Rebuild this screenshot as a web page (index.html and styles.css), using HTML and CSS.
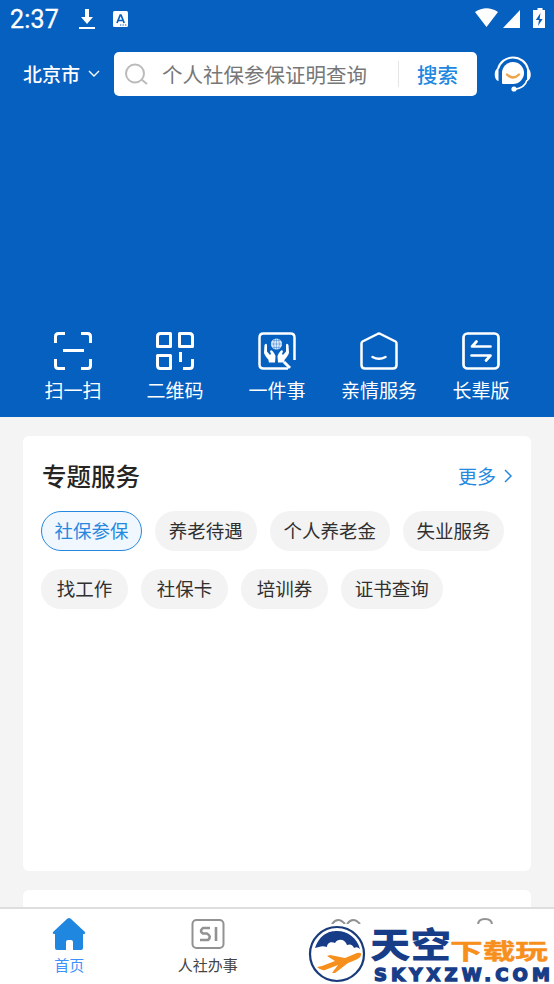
FILE: index.html
```html
<!DOCTYPE html>
<html lang="zh-CN">
<head>
<meta charset="UTF-8">
<title>首页</title>
<link rel="stylesheet" href="styles.css">
</head>
<body>
<div class="app">
  <header class="hero">
    <div class="status">
      <span class="clock">2:37</span>
      <svg class="download" width="16" height="22" viewBox="0 0 16 22"><path d="M6 1h4v8h4l-6 7-6-7h4zM0 19h16v2H0z" fill="#fff"/></svg>
      <svg class="input-mode" width="15" height="16" viewBox="0 0 15 16"><rect width="15" height="16" rx="1.5" fill="#fff"/><path d="M4 12 7.200 4h.8l3.200 8M5.200 9.500h5" fill="none" stroke="#0660c0" stroke-width="1.700"/><path d="M7 14h1.300M9.500 14h1.300M12 14h1.300" stroke="#0660c0"/></svg>
      <svg class="signals" width="72" height="22" viewBox="0 0 72 22" fill="#fff"><path d="M0 4Q11.500-3.500 23 4L11.500 19zM45 2v18H28zM60 2h2.500V0h5v2H70v18H58V2z"/><path d="m65.500 5-4.700 7h3.200l-1 6 4.600-7h-3z" fill="#0660c0"/></svg>
    </div>
    <div class="top-row">
      <span class="city">北京市</span>
      <svg class="caret" width="12" height="8" viewBox="0 0 12 8"><path d="m1 1 5 5 5-5" fill="none" stroke="#fff" stroke-width="1.400"/></svg>
      <div class="search">
        <svg width="24" height="22" viewBox="0 0 24 22" fill="none" stroke="#bbb" stroke-width="2"><circle cx="10" cy="10.500" r="9"/><path d="m16.500 16.500 5.500 4.500"/></svg>
        <span class="query">个人社保参保证明查询</span>
        <span class="submit">搜索</span>
      </div>
      <svg class="service" width="38" height="38" viewBox="0 0 38 38"><path d="M4 14a15.500 15.500 0 0 1 30 0" fill="none" stroke="#fff" stroke-width="2"/><path d="M4.500 13v13C-.5 25-.5 14 4.500 13M33 13v13c5-1 5-12 0-13" fill="#fff"/><path d="M33 25q-2 8-13 9.500" fill="none" stroke="#fff" stroke-width="1.600"/><circle cx="20" cy="34" r="2.600" fill="#fff"/><path d="M8 28V18a11 11 0 1 1 11 11H9q-1 0-1-1" fill="#fff"/><path d="M13 19.500q6 6 12 0" fill="none" stroke="#eea349" stroke-width="2.400" stroke-linecap="round"/></svg>
    </div>
    <nav class="shortcuts">
      <div class="shortcut"><svg viewBox="0 0 38 38"><path d="M1.500 11V4.500q0-3 3-3H11M27 1.500h6.500q3 0 3 3V11M1.500 27v6.500q0 3 3 3H11M27 36.500h6.500q3 0 3-3V27M9 18.500h21"/></svg><span>扫一扫</span></div>
      <div class="shortcut"><svg viewBox="0 0 38 38"><path d="M4.500 1.500h10v13h-13v-10q0-3 3-3M23.500 1.500h10q3 0 3 3v10h-13zM1.500 23.500h13v13h-10q-3 0-3-3zM24.500 20v10M36.500 27v6.500q0 3-3 3H27"/></svg><span>二维码</span></div>
      <div class="shortcut"><svg viewBox="0 0 38 38"><path d="M36.500 28V5.500q0-4-4-4h-27q-4 0-4 4v27q0 4 4 4H30" stroke-width="2.500"/><circle cx="18.500" cy="12" r="5.600" fill="#d8e7fa" stroke="none"/><path d="M13 12h11M18.500 6.500v11M14.500 8.500h8M14.500 15.500h8M16.500 7q-2 5 0 10M20.500 7q2 5 0 10" stroke="#0660c0" stroke-width=".35"/><path d="M6.500 13q1.800-2.500 2.500 0v6.500l3 3.500 1-1.200-1-2.300q.8-2 2.500-.5 3 3.500 3 5.500l-.5 6h-6l-.7-3q-4-4.500-4.300-7z" fill="#fff" stroke="none"/><path d="M30.500 13q-1.800-2.500-2.500 0v6.500l-3 3.500-1-1.200 1-2.300q-.8-2-2.500-.5-3 3.500-3 5.500l.5 6h6l.7-3q4-4.500 4.300-7z" fill="#fff" stroke="none"/><path d="m26 30 6 6" stroke-width="3"/></svg><span>一件事</span></div>
      <div class="shortcut"><svg viewBox="0 0 38 38"><path d="m2.500 9.500 15-7.500q1.500-1 3 0l15 7.500q1 .5 1 2V33q0 3.500-3.500 3.500H5Q1.500 36.500 1.500 33V11.500q0-1.500 1-2M12.500 25q6.500 3.500 13 0" stroke-width="2.500" stroke-linecap="round"/></svg><span>亲情服务</span></div>
      <div class="shortcut"><svg viewBox="0 0 38 38"><rect x="1.500" y="1.500" width="35" height="35" rx="4" stroke-width="2.700"/><path d="M28.500 14.500H10l4.500-5M9.500 23.500h19l-4.500 5" stroke-width="2.700" stroke-linecap="round"/></svg><span>长辈版</span></div>
    </nav>
  </header>
  <main class="content">
    <section class="topics">
      <div class="heading"><h1>专题服务</h1><span class="more">更多</span><svg width="9" height="14" viewBox="0 0 9 14"><path d="m1 1 6 6-6 6" fill="none" stroke="#2588df" stroke-width="1.500"/></svg></div>
      <div class="chips"><span class="chip selected">社保参保</span><span class="chip">养老待遇</span><span class="chip">个人养老金</span><span class="chip">失业服务</span><span class="chip">找工作</span><span class="chip">社保卡</span><span class="chip">培训券</span><span class="chip">证书查询</span></div>
    </section>
    <section class="next-card"></section>
  </main>
  <nav class="tabs">
    <div class="tab active"><svg width="34" height="34" viewBox="0 0 34 34"><path d="M15.500 1.500q1.500-1 3 0L33 15q1 2-2 2v14q0 2-2 2h-8v-8q0-2-2-2h-3q-2 0-2 2v8H5q-2 0-2-2V17q-3 0-2-2z" fill="#2087e0"/></svg><span>首页</span></div>
    <div class="tab"><svg width="34" height="34" viewBox="0 0 34 34" fill="none" stroke="#929292" stroke-width="2"><rect x="1.500" y="3" width="31" height="28" rx="4"/><path d="M19 11h-7q-4 3 0 5.500h4q5 3 1 6.500H9M25 10v14" stroke-width="2.600"/></svg><span>人社办事</span></div>
    <div class="tab"><svg width="34" height="34" viewBox="0 0 34 34" fill="none" stroke="#929292" stroke-width="2"><path d="M3 7q6-8 13 0M18 7q6-8 13 0"/></svg></div>
    <div class="tab"><svg width="34" height="34" viewBox="0 0 34 34" fill="none" stroke="#929292" stroke-width="2"><path d="M10 8q0-6 7-6t7 6"/></svg></div>
  </nav>
  <aside class="watermark">
    <svg class="emblem" width="58" height="58" viewBox="0 0 58 58"><circle cx="29" cy="29" r="27" fill="#fff" stroke="#193b7b" stroke-width="2.200"/><path d="M7 23C12 9 21 6 29 6c11 0 20 7 23 18q-3-3-6-1-2-5-7-3c-2-6-9-7-12-2-4-2-8 0-8 4-5-2-8 0-12 1" fill="#183d88"/><path d="m9 42 5-1 13-5-8-5 3-1 15 3 12-5q5-1 4 2 0 3-8 6l-5 2-13 10h-3l6-8-13 5q-4 1-8-3" fill="#f78f1c"/></svg>
    <svg class="brand" width="184" height="58" viewBox="0 0 184 58">
      <text class="sky" x="4" y="33" textLength="81" lengthAdjust="spacingAndGlyphs">天空</text>
      <text class="play" x="84" y="33.500" textLength="98" lengthAdjust="spacingAndGlyphs">下载玩</text>
      <text class="domain" x="8" y="56" textLength="176" lengthAdjust="spacing">SKYXZW.COM</text>
    </svg>
  </aside>
</div>
</body>
</html>
```
FILE: styles.css
```css
* { box-sizing: border-box; }
body { margin: 0; font-family: "Noto Sans CJK SC", sans-serif; }
.app { position: relative; width: 554px; height: 984px; overflow: hidden; background: #f4f4f4; display: flex; flex-direction: column; }
.hero { height: 417px; flex: none; background: #0660c0; color: #fff; display: flex; flex-direction: column; }
.status { height: 38px; display: flex; align-items: center; padding: 0 7px 0 10px; }
.clock { font: 400 25px Roboto, sans-serif; -webkit-text-stroke: .3px #fff; width: 69px; letter-spacing: .2px; }
.input-mode { margin-left: 18px; margin-top: -1px; }
.signals { margin-left: auto; }
.top-row { height: 44px; margin-top: 14px; padding: 0 22px 0 23px; display: flex; align-items: center; }
.city { width: 57px; margin-top: -2px; font-size: 19px; font-weight: 500; white-space: nowrap; }
.caret { margin-left: 8px; margin-right: 14px; }
.search { width: 363px; height: 44px; border-radius: 5px; background: #fff; display: flex; align-items: center; padding-left: 11px; }
.query { margin-left: 13px; width: 237px; color: #777; font-size: 20.5px; line-height: 26px; border-right: 1px solid #e5e5e5; white-space: nowrap; }
.submit { margin-left: 18px; color: #2087e0; font-size: 20.5px; font-weight: 500; }
.service { margin-left: 17px; margin-top: -1px; flex: none; }
.shortcuts { margin-top: 235px; padding: 0 22px; display: grid; grid-template-columns: repeat(5, 102px); }
.shortcut { display: flex; flex-direction: column; align-items: center; font-size: 19px; line-height: 26px; white-space: nowrap; }
.shortcut svg { width: 38px; height: 38px; margin-top: .5px; margin-bottom: 7.5px; fill: none; stroke: #fff; stroke-width: 3; stroke-linejoin: round; }
.content { height: 490px; padding: 19px 23px 0; overflow: hidden; }
.topics { height: 435px; background: #fff; border-radius: 6px; padding: 19px 18px; }
.heading { display: flex; align-items: center; height: 40px; }
.heading svg { margin-top: 1px; }
h1 { margin: 0 0 0 1px; font-size: 24.5px; font-weight: 500; color: #252525; }
.more { margin-left: auto; margin-right: 8px; color: #2588df; font-size: 19px; }
.chips { width: 480px; margin-top: 15.5px; display: flex; flex-wrap: wrap; gap: 18px 13px; }
.chip { height: 40px; border-radius: 20px; padding: 0 13.8px 2px; display: flex; align-items: center; justify-content: center; min-width: 87px; background: #f3f3f3; color: #303030; font-size: 18.5px; white-space: nowrap; }
.selected { padding: 0 12.5px 2px; border: 1.5px solid #2588df; background: #f0f7ff; color: #2588df; }
.next-card { margin-top: 19px; height: 60px; background: #fff; border-radius: 6px 6px 0 0; }
.tabs { height: 77px; background: #fff; border-top: 2px solid #dedede; display: grid; grid-template-columns: repeat(4, 1fr); padding-top: 8px; }
.tab { display: flex; flex-direction: column; align-items: center; font-size: 15px; line-height: 22px; color: #444; }
.tab span { margin-top: 3px; }
.active { color: #3d91fa; }
.watermark { position: absolute; left: 307px; top: 924px; width: 247px; height: 60px; background: #fff; display: flex; padding: 1px; }
.emblem { flex: none; }
.brand { flex: none; overflow: visible; }
.sky { font: 900 35px "Noto Sans CJK SC", sans-serif; fill: #183d88; }
.play { font: 700 22px "Noto Sans CJK SC", sans-serif; fill: #f78f1c; stroke: #f78f1c; stroke-width: .4; }
.domain { font: 900 18px "DejaVu Sans", sans-serif; fill: #183d88; stroke: #183d88; stroke-width: 1.4; }
```
